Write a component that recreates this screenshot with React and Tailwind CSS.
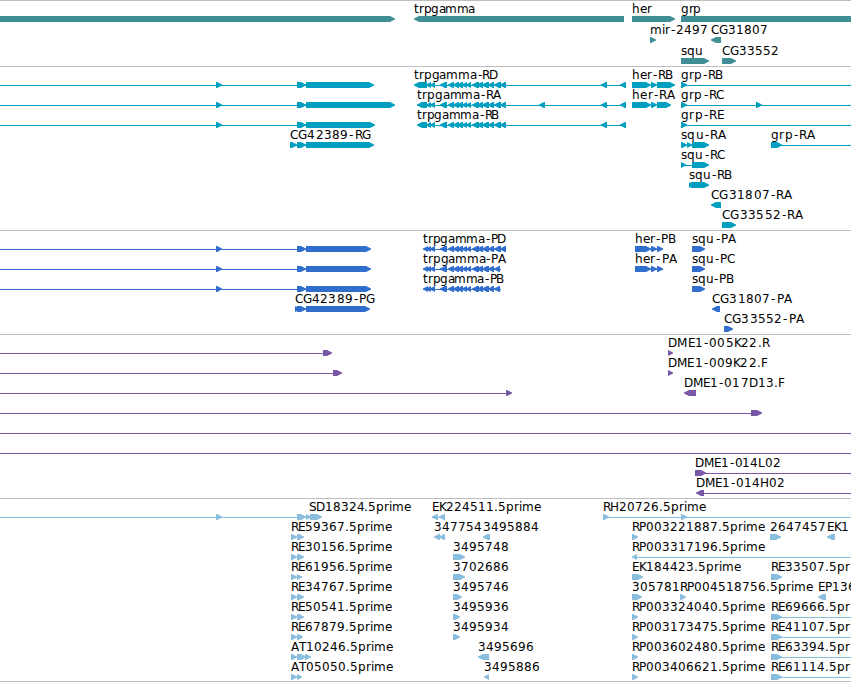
const WIDTH = 851

// Exons shared by every trpgamma transcript and protein
const TRP_EXONS = [
    [440, 447], [448, 454], [453, 459], [457, 463], [462, 467], [466, 471],
    [472, 479], [477, 483], [482, 489], [488, 494],
]

// A row holds: labels [x, end, text], introns [x1, x2], forward and reverse boxes [x1, x2]
const genes = [
    {
        labels: [[414, 475, "trpgamma"], [632, 652, "her"], [681, 701, "grp"]],
        fwd: [[-5, 395], [632, 675], [681, 870]],
        rev: [[414, 624]],
    },
    {
        labels: [[650, 708, "mir-2497"], [711, 768, "CG31807"]],
        fwd: [[650, 656]],
        rev: [[711, 721]],
    },
    {
        labels: [[681, 703, "squ"], [722, 779, "CG33552"]],
        fwd: [[681, 709], [722, 736]],
    },
]

const transcripts = [
    {
        labels: [[414, 498, "trpgamma-RD"], [632, 673, "her-RB"], [681, 723, "grp-RB"]],
        lines: [[0, 306], [430, 626], [681, 851]],
        fwd: [[216, 222], [297, 306], [306, 374], [632, 651], [651, 657], [657, 675], [681, 687]],
        rev: [[414, 427], [426, 431], [430, 435], ...TRP_EXONS, [494, 501], [500, 506], [601, 607], [620, 626]],
    },
    {
        labels: [[417, 501, "trpgamma-RA"], [632, 675, "her-RA"], [681, 724, "grp-RC"]],
        lines: [[0, 306], [430, 626], [681, 851]],
        fwd: [[216, 222], [297, 306], [306, 395], [632, 651], [651, 657], [657, 671], [681, 687], [756, 762]],
        rev: [[417, 427], [426, 431], [430, 435], ...TRP_EXONS, [494, 501], [500, 506], [539, 545], [601, 607], [620, 626]],
    },
    {
        labels: [[417, 499, "trpgamma-RB"], [681, 724, "grp-RE"]],
        lines: [[0, 306], [430, 626], [681, 851]],
        fwd: [[216, 222], [297, 306], [306, 375], [681, 687]],
        rev: [[417, 427], [426, 431], [430, 435], ...TRP_EXONS, [494, 501], [500, 506], [601, 607], [620, 626]],
    },
    {
        labels: [[290, 371, "CG42389-RG"], [681, 726, "squ-RA"], [771, 815, "grp-RA"]],
        lines: [[290, 306], [681, 692], [771, 851]],
        fwd: [[290, 297], [297, 306], [306, 374], [681, 687], [687, 692], [692, 709], [771, 782]],
    },
    {
        labels: [[681, 725, "squ-RC"]],
        lines: [[681, 692]],
        fwd: [[681, 686], [692, 709]],
    },
    { labels: [[689, 732, "squ-RB"]], fwd: [[689, 693], [691, 709]] },
    { labels: [[711, 792, "CG31807-RA"]], rev: [[711, 721]] },
    { labels: [[722, 803, "CG33552-RA"]], fwd: [[722, 736]] },
]

const proteins = [
    {
        labels: [[423, 506, "trpgamma-PD"], [635, 676, "her-PB"], [692, 736, "squ-PA"]],
        lines: [[0, 306], [423, 506], [635, 663]],
        fwd: [[216, 222], [297, 306], [306, 371], [635, 651], [651, 657], [657, 663], [692, 705]],
        rev: [[423, 428], [426, 431], [430, 435], ...TRP_EXONS, [494, 501], [500, 506]],
    },
    {
        labels: [[423, 506, "trpgamma-PA"], [635, 677, "her-PA"], [692, 735, "squ-PC"]],
        lines: [[0, 306], [423, 501], [635, 663]],
        fwd: [[216, 222], [297, 306], [306, 371], [635, 651], [651, 657], [657, 663], [692, 705]],
        rev: [[423, 428], [426, 431], [430, 435], ...TRP_EXONS, [494, 500]],
    },
    {
        labels: [[423, 504, "trpgamma-PB"], [692, 734, "squ-PB"]],
        lines: [[0, 306], [423, 501]],
        fwd: [[216, 222], [297, 306], [306, 371], [692, 705]],
        rev: [[423, 428], [426, 431], [430, 435], ...TRP_EXONS, [494, 500]],
    },
    {
        labels: [[295, 375, "CG42389-PG"], [712, 792, "CG31807-PA"]],
        lines: [[295, 306]],
        fwd: [[295, 300], [297, 306], [306, 370]],
        rev: [[712, 720]],
    },
    { labels: [[724, 804, "CG33552-PA"]], fwd: [[724, 733]] },
]

const clones = [
    { labels: [[668, 769, "DME1-005K22.R"]], lines: [[0, 330]], fwd: [[323, 332], [668, 673]] },
    { labels: [[668, 768, "DME1-009K22.F"]], lines: [[0, 340]], fwd: [[333, 342], [668, 673]] },
    { labels: [[684, 785, "DME1-017D13.F"]], lines: [[0, 510]], fwd: [[506, 512]], rev: [[684, 696]] },
    { lines: [[0, 760]], fwd: [[751, 762]] },
    { lines: [[0, 851]] },
    { lines: [[0, 851]] },
    { labels: [[695, 781, "DME1-014L02"]], lines: [[700, 851]], fwd: [[695, 706]] },
    { labels: [[696, 785, "DME1-014H02"]], lines: [[700, 851]], rev: [[696, 704]] },
]

const ests = [
    {
        labels: [[309, 411, "SD18324.5prime"], [432, 541, "EK224511.5prime"], [603, 706, "RH20726.5prime"]],
        lines: [[0, 310], [432, 445], [603, 851]],
        fwd: [[216, 222], [297, 306], [306, 311], [310, 322], [603, 609], [681, 687]],
        rev: [[432, 438], [439, 445]],
    },
    {
        labels: [[291, 392, "RE59367.5prime"], [434, 482, "347754"], [483, 539, "3495884"], [632, 765, "RP003221887.5prime"], [770, 826, "2647457"], [827, 849, "EK1"]],
        fwd: [[291, 297], [297, 304], [632, 638], [770, 781]],
        rev: [[434, 440], [439, 445], [483, 490], [827, 835]],
    },
    {
        labels: [[291, 392, "RE30156.5prime"], [453, 509, "3495748"], [632, 765, "RP003317196.5prime"]],
        lines: [[634, 851]],
        fwd: [[291, 297], [297, 304], [453, 465]],
        rev: [[632, 637]],
    },
    {
        labels: [[291, 392, "RE61956.5prime"], [453, 509, "3702686"], [632, 741, "EK184423.5prime"], [771, 850, "RE33507.5pr"]],
        fwd: [[291, 297], [297, 302], [453, 465], [632, 643], [771, 782]],
    },
    {
        labels: [[291, 392, "RE34767.5prime"], [453, 509, "3495746"], [632, 680, "305781"], [680, 813, "RP004518756.5prime"], [818, 856, "EP136"]],
        fwd: [[291, 297], [297, 304], [453, 462], [632, 642], [680, 686]],
        rev: [[818, 826]],
    },
    {
        labels: [[291, 392, "RE50541.5prime"], [453, 509, "3495936"], [632, 765, "RP003324040.5prime"], [771, 850, "RE69666.5pr"]],
        lines: [[771, 851]],
        fwd: [[291, 297], [297, 304], [453, 460], [632, 638], [771, 782]],
    },
    {
        labels: [[291, 392, "RE67879.5prime"], [453, 509, "3495934"], [632, 765, "RP003173475.5prime"], [771, 850, "RE41107.5pr"]],
        lines: [[771, 851]],
        fwd: [[291, 297], [297, 303], [453, 460], [632, 638], [771, 782]],
    },
    {
        labels: [[291, 393, "AT10246.5prime"], [478, 534, "3495696"], [632, 765, "RP003602480.5prime"], [771, 850, "RE63394.5pr"]],
        lines: [[771, 851]],
        fwd: [[291, 297], [297, 306], [305, 311], [632, 638], [771, 782]],
        rev: [[478, 489]],
    },
    {
        labels: [[291, 393, "AT05050.5prime"], [484, 540, "3495886"], [632, 765, "RP003406621.5prime"], [771, 850, "RE61114.5pr"]],
        lines: [[771, 851]],
        fwd: [[291, 297], [297, 302], [632, 638], [771, 782]],
        rev: [[484, 489]],
    },
]

const tracks = [
    { name: "genes", rows: genes, className: "h-[66px] text-[#408f96]", rowHeight: 21 },
    { name: "transcripts", rows: transcripts, className: "h-[164px] text-[#009fc0]", rowHeight: 20 },
    { name: "proteins", rows: proteins, className: "h-[104px] text-[#316dcc]", rowHeight: 20 },
    { name: "clones", rows: clones, className: "h-[164px] text-[#7858a6]", rowHeight: 20 },
    { name: "ests", rows: ests, className: "h-[183px] text-[#88bddd]", rowHeight: 20 },
]

// Whole pixel advances; anything not listed is as wide as a digit
const ADVANCE = {
    t: 5, r: 5, i: 3, m: 12, a: 7, e: 7, s: 6, ".": 4, "-": 6,
    R: 7, E: 7, P: 7, K: 7, F: 7, L: 7, S: 7, T: 7, B: 8, C: 8, G: 9, D: 9, H: 9, M: 10,
}

const advanceOf = (char) => ADVANCE[char] || 8

function glyphPositions(text, x, end) {
    const chars = [...text]
    const total = chars.reduce((sum, char) => sum + advanceOf(char), 0)
    const scale = (end - x) / total
    let offset = 0
    return chars.map((char) => {
        // the hyphen sits in the middle of its cell
        const pos = Math.round(x + offset * scale) + (char === "-" ? 1 : 0)
        offset += advanceOf(char)
        return pos
    }).join(" ")
}

function Box({ from, to, reverse }) {
    const head = Math.min(5, to - from)
    const points = reverse
        ? `${to},15 ${from + head},15 ${from},17.5 ${from},18.5 ${from + head},21 ${to},21`
        : `${from},15 ${to - head},15 ${to},17.5 ${to},18.5 ${to - head},21 ${from},21`
    return <polygon points={points} fill="currentColor" />
}

function Row({ row, height }) {
    const { labels = [], lines = [], fwd = [], rev = [] } = row

    return (
        <svg width={WIDTH} height={height} className="block shrink-0 overflow-visible">
            {lines.map(([a, b]) => (
                <rect key={a} x={a} y={18} width={b - a} height={1} fill="currentColor" />
            ))}
            {fwd.map(([a, b]) => <Box key={a} from={a} to={b} />)}
            {rev.map(([a, b]) => <Box key={a} from={a} to={b} reverse />)}
            {labels.map(([x, end, text]) => (
                <text key={text} x={glyphPositions(text, x, end)} y={12} className="fill-black">
                    {text}
                </text>
            ))}
        </svg>
    )
}

export default function App() {
    return (
        <main className="flex h-[682px] w-[851px] flex-col overflow-hidden border-b border-[#bebebe] bg-white font-['DejaVu_Sans',sans-serif] text-[12px]">
            {tracks.map((track) => (
                <section key={track.name} className={`flex shrink-0 flex-col border-t border-[#bebebe] ${track.className}`}>
                    {track.rows.map((row, i) => (
                        <Row key={i} row={row} height={track.rowHeight} />
                    ))}
                </section>
            ))}
        </main>
    )
}
